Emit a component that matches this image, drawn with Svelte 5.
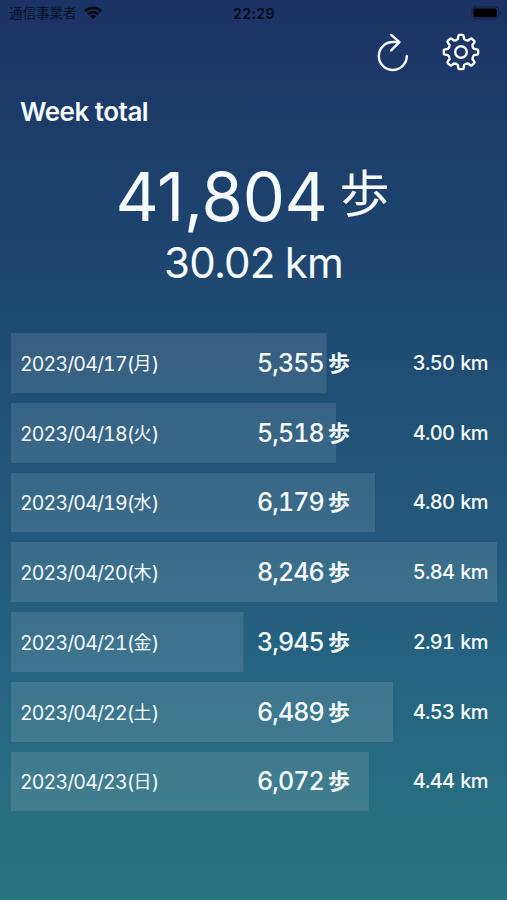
<script>
    const days = [
        { date: "2023/04/17", weekday: "月", steps: 5355, km: 3.5 },
        { date: "2023/04/18", weekday: "火", steps: 5518, km: 4 },
        { date: "2023/04/19", weekday: "水", steps: 6179, km: 4.8 },
        { date: "2023/04/20", weekday: "木", steps: 8246, km: 5.84 },
        { date: "2023/04/21", weekday: "金", steps: 3945, km: 2.91 },
        { date: "2023/04/22", weekday: "土", steps: 6489, km: 4.53 },
        { date: "2023/04/23", weekday: "日", steps: 6072, km: 4.44 }
    ];

    const format = (n) => n.toLocaleString("en-US");

    $: totalSteps = days.reduce((sum, day) => sum + day.steps, 0);
    $: totalKm = days.reduce((sum, day) => sum + day.km, 0);
    $: maxSteps = Math.max(...days.map((day) => day.steps));

    // Outline of the gear: eight teeth around the centre of a 40x40 box
    function gearPath() {
        const point = (r, deg) => {
            const a = (deg * Math.PI) / 180;
            return `${(20 + r * Math.sin(a)).toFixed(2)} ${(20 - r * Math.cos(a)).toFixed(2)}`;
        };
        let d = "";
        for (let i = 0; i < 8; i++) {
            const a = i * 45;
            d += `${i ? "L" : "M"}${point(13.4, a - 13.5)}`;
            d += `L${point(16.2, a - 9.5)}Q${point(17.2, a - 8.5)} ${point(17.2, a - 6)}`;
            d += `L${point(17.2, a + 6)}Q${point(17.2, a + 8.5)} ${point(16.2, a + 9.5)}`;
            d += `L${point(13.4, a + 13.5)}Q${point(12.3, a + 22.5)} ${point(13.4, a + 31.5)}`;
        }
        return d + "Z";
    }
</script>

<main>
    <div class="status">
        <div class="carrier">
            <span>通信事業者</span>
            <svg width="20" height="14" viewBox="0 0 20 14">
                <path d="M1.8 5.2a11.6 11.6 0 0 1 16.4 0" />
                <path d="M4.8 8.2a7.4 7.4 0 0 1 10.4 0" />
                <path class="dot" d="M10 13.2 6.9 10.1a4.4 4.4 0 0 1 6.2 0z" />
            </svg>
        </div>
        <time>22:29</time>
        <svg class="battery" width="31" height="14" viewBox="0 0 31 14">
            <rect class="case" x="0.8" y="0.9" width="26.4" height="12" rx="3" />
            <rect x="2.4" y="2.5" width="23.2" height="8.8" rx="1.5" />
            <path class="tip" d="M28.5 5v4q1.7-.6 1.7-2t-1.7-2z" />
        </svg>
    </div>

    <nav>
        <button aria-label="Reload">
            <svg width="40" height="40" viewBox="0 0 40 40">
                <path d="M33.8 24a14 14 0 1 1-14-14h6.5M18.2 2.9l8.2 7.3-8.2 8.2" />
            </svg>
        </button>
        <button aria-label="Settings">
            <svg width="40" height="40" viewBox="0 0 40 40">
                <path d={gearPath()} />
                <circle cx="20" cy="20" r="5.8" />
            </svg>
        </button>
    </nav>

    <h1>Week total</h1>

    <section class="total">
        <p class="steps"><span class="count">{format(totalSteps)}</span><span class="unit">歩</span></p>
        <p class="distance">{totalKm.toFixed(2)} km</p>
    </section>

    <ul>
        {#each days as day}
            <li style="--share: {day.steps / maxSteps}">
                <span class="date">{day.date}(<i>{day.weekday}</i>)</span>
                <span class="day-steps">{format(day.steps)}<b>歩</b></span>
                <span class="km">{day.km.toFixed(2)} km</span>
            </li>
        {/each}
    </ul>
</main>

<style>
:global(body) {
    margin: 0;
}

main {
    box-sizing: border-box;
    width: 100%;
    height: 900px;
    overflow: hidden;
    color: #f5fbff;
    background: linear-gradient(#1b3365, #205075 45%, #256480 75%, #297580);
    font-family: Inter, "Noto Sans CJK JP", sans-serif;
}

svg {
    display: block;
    fill: none;
    stroke: currentColor;
    stroke-width: 2.4;
    stroke-linecap: round;
    stroke-linejoin: round;
}

/* Status bar */
.status {
    display: grid;
    grid-template-columns: 1fr auto 1fr;
    align-items: center;
    height: 27px;
    padding: 0 5px 0 9px;
    color: #030a14;
}

.carrier {
    display: flex;
    align-items: center;
    gap: 6px;
    font-size: 13.5px;
    line-height: 27px;
}

.carrier span {
    opacity: 0.8;
}

.carrier svg {
    margin-top: -2px;
    stroke-width: 2.7;
    stroke-linecap: butt;
}

.carrier .dot {
    fill: currentColor;
    stroke: none;
}

time {
    margin-right: 3px;
    font-size: 14px;
    font-weight: 600;
    letter-spacing: 0.5px;
}

.battery {
    justify-self: end;
    margin-top: -1px;
    fill: #000;
    stroke: none;
}

.battery .case {
    fill: none;
    stroke: #000;
    stroke-width: 1;
    opacity: 0.3;
}

.battery .tip {
    opacity: 0.3;
}

/* Toolbar */
nav {
    display: flex;
    justify-content: flex-end;
    gap: 28px;
    height: 53px;
    padding: 5px 26px 0 0;
    box-sizing: border-box;
}

button {
    width: 40px;
    height: 40px;
    padding: 0;
    border: none;
    background: none;
    color: inherit;
}

h1 {
    margin: 15px 0 0 20px;
    font-size: 26px;
    font-weight: 600;
    line-height: 34px;
    letter-spacing: -0.5px;
}

/* Week total */
.total {
    height: 204px;
    padding-top: 26px;
    box-sizing: border-box;
    text-align: center;
}

.total p {
    margin: 0;
}

.steps {
    display: flex;
    justify-content: center;
    align-items: center;
    gap: 12px;
    height: 84px;
}

.count {
    margin-left: -2px;
    font-size: 67px;
    line-height: 84px;
    letter-spacing: -0.3px;
}

.unit {
    margin-top: -6px;
    font-size: 50px;
    line-height: 84px;
    font-weight: 400;
}

.distance {
    font-size: 42px;
    line-height: 48px;
    letter-spacing: -0.8px;
    word-spacing: -1px;
}

/* Days */
ul {
    display: grid;
    gap: 10px;
    margin: 0;
    padding: 0 10px 0 11px;
    list-style: none;
}

li {
    display: grid;
    grid-template-columns: 1fr 160px 138px;
    align-items: center;
    height: 59.75px;
    padding: 0 9px 0 10px;
    box-sizing: border-box;
    background: linear-gradient(rgba(255, 255, 255, 0.11), rgba(255, 255, 255, 0.11)) no-repeat;
    background-size: calc(var(--share) * 100%) 100%;
    font-variant-numeric: tabular-nums;
    white-space: nowrap;
}

.date {
    margin: 3px 0 0 -1px;
    font-size: 19.5px;
    line-height: 24px;
    letter-spacing: -0.85px;
}

.date i {
    position: relative;
    top: -1px;
    margin: 0 1px 0 0;
    font-size: 18px;
    font-style: normal;
}

.day-steps {
    display: flex;
    align-items: center;
    justify-content: flex-end;
    margin-right: 1px;
    font-size: 25px;
    font-weight: 500;
    letter-spacing: -0.9px;
}

.day-steps b {
    margin: -4px 0 0 4px;
    font-size: 22px;
    font-weight: 700;
}

.km {
    font-size: 20px;
    font-weight: 500;
    letter-spacing: -0.6px;
    word-spacing: 1px;
    text-align: right;
}
</style>
